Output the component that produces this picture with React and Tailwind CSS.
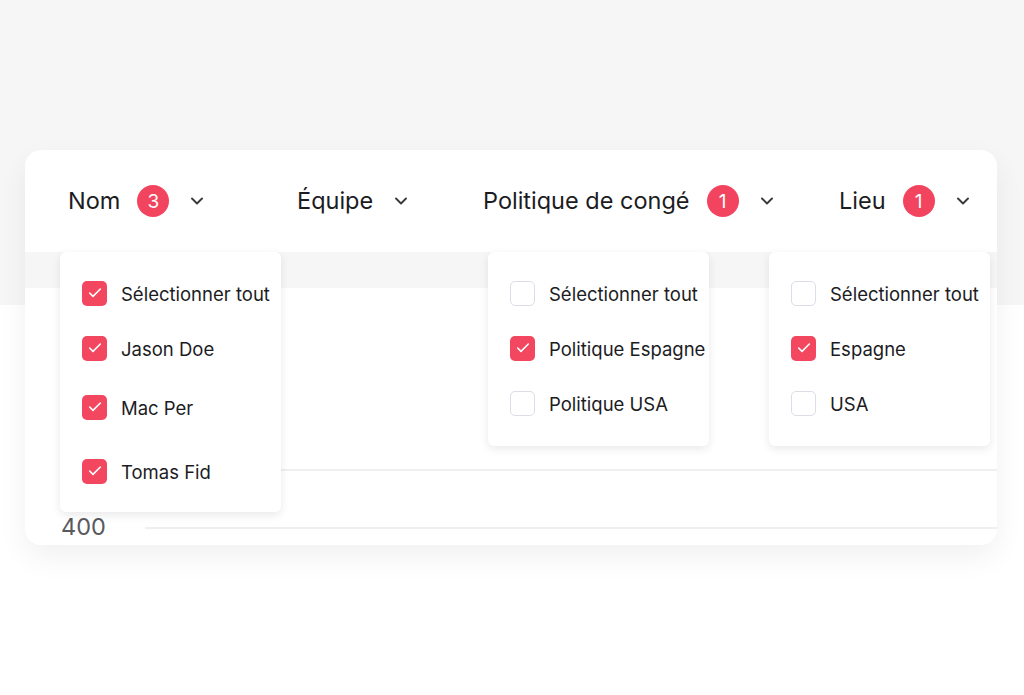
import { ChevronDown, Check } from 'lucide-react';

const FONT = { fontFamily: 'Inter, "Noto Sans", sans-serif' };

function Badge({ n }) {
    return (
        <span className="w-8 h-8 rounded-full bg-[#f3445f] text-white text-[19px] flex items-center justify-center leading-none">
            {n}
        </span>
    );
}

function FilterHead({ label, count, width }) {
    return (
        <div className={`flex items-center shrink-0 ${width}`}>
            <span className="text-[23.5px] text-[#1c1c1f]">{label}</span>
            {count ? (
                <div className="ml-[17px]">
                    <Badge n={count} />
                </div>
            ) : null}
            <ChevronDown className="w-5 h-5 text-[#3a3a3e] ml-[18px]" strokeWidth={2.3} />
        </div>
    );
}

function CheckItem({ label, checked, className = '' }) {
    return (
        <div className={`flex items-center h-[30px] ${className}`}>
            {checked ? (
                <span className="w-[25px] h-[25px] rounded-[5px] bg-[#f3475f] flex items-center justify-center shrink-0">
                    <Check className="w-[16px] h-[16px] text-white" strokeWidth={2.4} />
                </span>
            ) : (
                <span className="w-[25px] h-[25px] rounded-[5px] border-[1.5px] border-[#dcdde6] bg-white shrink-0" />
            )}
            <span className="ml-[14px] text-[18.5px] leading-[30px] pt-[2px] text-[#1c1c1f] whitespace-nowrap">{label}</span>
        </div>
    );
}

export default function App() {
    return (
        <div
            className="w-[1024px] h-[695px] overflow-hidden bg-[linear-gradient(to_bottom,#f6f6f7_305px,#ffffff_305px)] pt-[150px] px-[25px]"
            style={FONT}
        >
            <div className="relative w-[972px] h-[395px] bg-white rounded-[16px] shadow-[0_12px_30px_rgba(0,0,0,0.06)] overflow-hidden">
                {/* Header */}
                <div className="h-[102px] flex items-center pl-[43px]">
                    <FilterHead label="Nom" count={3} width="w-[229px]" />
                    <FilterHead label="Équipe" width="w-[186px]" />
                    <FilterHead label="Politique de congé" count={1} width="w-[356px]" />
                    <FilterHead label="Lieu" count={1} width="w-[150px]" />
                </div>

                {/* Grey band */}
                <div className="h-[36px] bg-[#f6f6f7]" />

                {/* Chart body */}
                <div className="h-[257px] relative">
                    <div className="absolute left-[120px] right-0 top-[181px] h-[2px] bg-[#efeff0]" />
                    <div className="absolute left-[120px] right-0 top-[239px] h-[2px] bg-[#efeff0]" />
                    <span className="absolute left-[36px] top-[224px] text-[23.5px] leading-[30px] text-[#5a5a5e]">400</span>
                </div>

                {/* Dropdowns */}
                <div className="absolute left-[35px] top-[102px] w-[221px] h-[260px] bg-white rounded-[6px] shadow-[0_3px_10px_rgba(0,0,0,0.09)] pt-[26px] pl-[22px] flex flex-col">
                    <CheckItem label="Sélectionner tout" checked />
                    <CheckItem label="Jason Doe" checked className="mt-[25px]" />
                    <CheckItem label="Mac Per" checked className="mt-[29px]" />
                    <CheckItem label="Tomas Fid" checked className="mt-[34px]" />
                </div>

                <div className="absolute left-[463px] top-[102px] w-[221px] h-[194px] bg-white rounded-[6px] shadow-[0_3px_10px_rgba(0,0,0,0.09)] pt-[26px] pl-[22px] flex flex-col">
                    <CheckItem label="Sélectionner tout" />
                    <CheckItem label="Politique Espagne" checked className="mt-[25px]" />
                    <CheckItem label="Politique USA" className="mt-[25px]" />
                </div>

                <div className="absolute left-[744px] top-[102px] w-[221px] h-[194px] bg-white rounded-[6px] shadow-[0_3px_10px_rgba(0,0,0,0.09)] pt-[26px] pl-[22px] flex flex-col">
                    <CheckItem label="Sélectionner tout" />
                    <CheckItem label="Espagne" checked className="mt-[25px]" />
                    <CheckItem label="USA" className="mt-[25px]" />
                </div>
            </div>
        </div>
    );
}
